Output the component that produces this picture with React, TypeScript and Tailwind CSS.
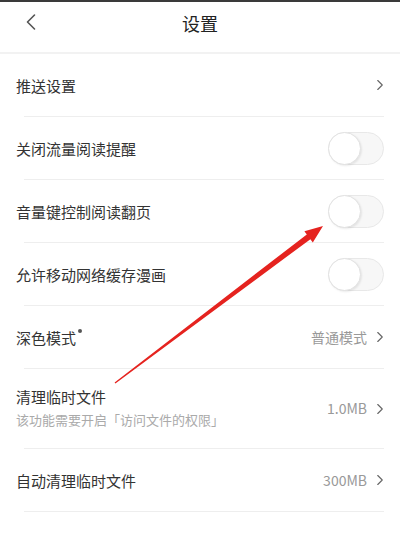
import { ChevronLeft, ChevronRight } from 'lucide-react';

const FONT = { fontFamily: '"Noto Sans CJK SC", "Noto Sans", sans-serif' };

function Toggle() {
  return (
    <span className="flex h-[33px] w-[56px] items-center rounded-full border border-[#e8e8e8] bg-[#f7f7f7]">
      <span className="h-[33px] w-[33px] -ml-px rounded-full border border-[#e2e2e2] bg-white shadow-[1px_1px_2px_rgba(0,0,0,0.08)]" />
    </span>
  );
}

function Arrow() {
  return <ChevronRight className="-mr-[5px] h-[18px] w-[18px] text-[#666]" strokeWidth={1.5} />;
}

function Row({
  children,
  right,
  tall,
}: {
  children: React.ReactNode;
  right: React.ReactNode;
  tall?: boolean;
}) {
  return (
    <div className={`flex items-center justify-between px-4 ${tall ? 'h-[79px]' : 'h-[62px]'}`}>
      <div className="min-w-0">{children}</div>
      <div className="flex items-center gap-1">{right}</div>
    </div>
  );
}

function Divider() {
  return <div className="ml-6 mr-4 h-px bg-[#eeeeee]" />;
}

export default function App() {
  return (
    <div className="relative h-[538px] w-[400px] overflow-hidden bg-white text-[#333]" style={FONT}>
      <div className="h-[2px] bg-[#3a3a3a]" />
      {/* header */}
      <div className="relative flex h-[52px] items-center justify-center border-b-2 border-[#f2f2f2]">
        <ChevronLeft className="absolute left-[17px] top-[6px] h-[28px] w-[28px] text-[#555]" strokeWidth={1.4} />
        <span className="pb-[7px] text-[18px] text-[#222]">设置</span>
      </div>

      <Row right={<Arrow />}>
        <span className="text-[15px]">推送设置</span>
      </Row>
      <Divider />
      <Row right={<Toggle />}>
        <span className="text-[15px]">关闭流量阅读提醒</span>
      </Row>
      <Divider />
      <Row right={<Toggle />}>
        <span className="text-[15px]">音量键控制阅读翻页</span>
      </Row>
      <Divider />
      <Row right={<Toggle />}>
        <span className="text-[15px]">允许移动网络缓存漫画</span>
      </Row>
      <Divider />
      <Row
        right={
          <>
            <span className="text-[14px] text-[#999]">普通模式</span>
            <Arrow />
          </>
        }
      >
        <span className="relative text-[15px]">
          深色模式
          <span className="absolute -right-[6px] top-[2px] h-[4px] w-[4px] rounded-full bg-[#555]" />
        </span>
      </Row>
      <Divider />
      <Row
        tall
        right={
          <>
            <span className="text-[14px] text-[#999]">1.0MB</span>
            <Arrow />
          </>
        }
      >
        <div className="flex flex-col gap-[3px] pb-[3px]">
          <span className="text-[15px] leading-[22px]">清理临时文件</span>
          <span className="text-[13px] leading-[18px] text-[#aaa]">该功能需要开启「访问文件的权限」</span>
        </div>
      </Row>
      <Divider />
      <Row
        right={
          <>
            <span className="text-[14px] text-[#999]">300MB</span>
            <Arrow />
          </>
        }
      >
        <span className="text-[15px]">自动清理临时文件</span>
      </Row>
      <Divider />

      {/* red annotation arrow */}
      <svg className="pointer-events-none absolute left-0 top-0" width="400" height="538" viewBox="0 0 400 538">
        <polygon
          points="114.6,382.6 306.8,234.4 304.4,231.2 323,226 312.8,242.4 310.4,239.2 115.4,383.4"
          fill="#e5231f"
        />
      </svg>
    </div>
  );
}
